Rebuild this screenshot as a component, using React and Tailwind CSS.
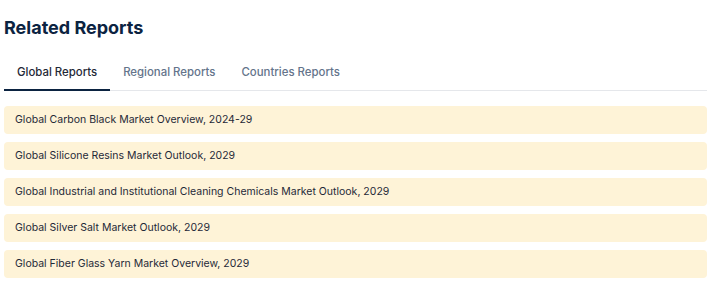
export default function App() {
  const items = [
    "Global Carbon Black Market Overview, 2024-29",
    "Global Silicone Resins Market Outlook, 2029",
    "Global Industrial and Institutional Cleaning Chemicals Market Outlook, 2029",
    "Global Silver Salt Market Outlook, 2029",
    "Global Fiber Glass Yarn Market Overview, 2029",
  ];
  const tabs = ["Global Reports", "Regional Reports", "Countries Reports"];
  return (
    <div className="w-[715px] h-[283px] bg-white px-[4px] pt-[16px]" style={{ fontFamily: "Inter, 'Noto Sans', sans-serif" }}>
      <h2 className="text-[18px] leading-[24px] font-bold text-[#0b2341]">Related Reports</h2>
      <div className="mt-[24px] w-[703px] flex border-b border-[#e5e7eb]">
        {tabs.map((t, i) => (
          <div
            key={t}
            className={
              "px-[13px] pb-[9px] text-[11.4px] leading-[16px] font-medium " +
              (i === 0 ? "text-[#1f2937] border-b-2 border-[#0b2341] -mb-[1px]" : "text-[#64748b]")
            }
          >
            {t}
          </div>
        ))}
      </div>
      <div className="mt-[15px] w-[703px] flex flex-col gap-[8px]">
        {items.map((t) => (
          <div key={t} className="h-[28px] rounded-[4px] bg-[#fef3d7] px-[11px] flex items-center text-[10.5px] text-[#1f2937]">
            {t}
          </div>
        ))}
      </div>
    </div>
  );
}
